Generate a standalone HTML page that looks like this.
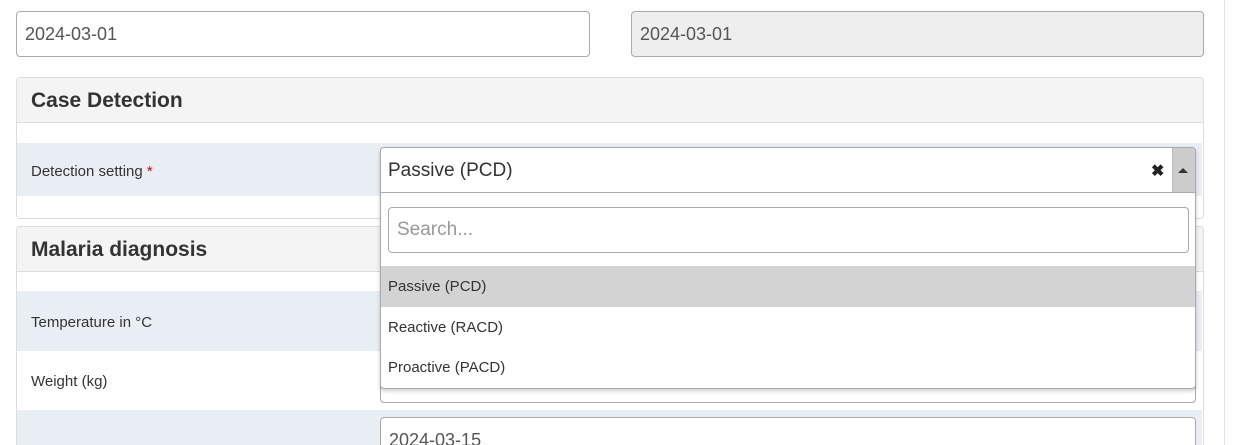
<!DOCTYPE html>
<html style="width:1235px;height:445px;overflow:hidden"><head><style>
*{box-sizing:border-box;margin:0;padding:0}
body{width:1235px;height:445px;overflow:hidden;background:#fff;font-family:"Liberation Sans",sans-serif;color:#333;position:relative}
.a{position:absolute}
.inp{position:absolute;border:1px solid #aaa;border-radius:4px;background:#fff;font-size:18px;color:#555;padding-left:8px;display:flex;align-items:center}
.panel{position:absolute;border:1px solid #ddd;border-radius:4px;background:#fff;overflow:hidden}
.ph{background:#f4f4f4;border-bottom:1px solid #ddd;height:45px;font-weight:bold;font-size:21px;padding-left:14px;line-height:45px;color:#333}
.lbl{position:absolute;left:31px;font-size:15px;color:#333}
.row{position:absolute;left:17px;width:1185px;background:#e9eef5}
</style></head><body>
<div class="a" style="left:1224px;top:0;width:1px;height:445px;background:#e5e5e5"></div>
<div class="inp" style="left:16px;top:11px;width:574px;height:46px">2024-03-01</div>
<div class="inp" style="left:631px;top:11px;width:573px;height:46px;background:#eee">2024-03-01</div>

<div class="panel" style="left:16px;top:77px;width:1188px;height:142px"><div class="ph">Case Detection</div></div>
<div class="row" style="top:143px;height:53px"></div>
<div class="lbl" style="top:163px">Detection setting <span style="color:#d00">*</span></div>

<div class="panel" style="left:16px;top:226px;width:1188px;height:230px"><div class="ph">Malaria diagnosis</div></div>
<div class="row" style="top:291px;height:60px"></div>
<div class="row" style="top:410px;height:40px"></div>
<div class="lbl" style="top:314px">Temperature in °C</div>
<div class="lbl" style="top:373px">Weight (kg)</div>
<div class="inp" style="left:380px;top:357px;width:816px;height:46px"></div>
<div class="inp" style="left:380px;top:417px;width:816px;height:46px;align-items:flex-start;padding-top:12px">2024-03-15</div>

<div class="a" style="left:380px;top:147px;width:816px;height:242px;border:1px solid #aaa;border-radius:4px;background:#fff;box-shadow:0 2px 4px rgba(0,0,0,.2)"></div>
<div class="a" style="left:380px;top:147px;width:816px;height:46px;border-bottom:1px solid #aaa;font-size:19px;color:#333;padding-left:8px;line-height:47px">Passive (PCD)</div>
<div class="a" style="left:1172px;top:148px;width:23px;height:44px;background:#ccc;border-left:1px solid #bbb;border-top-right-radius:3px"></div>
<div class="a" style="left:1178px;top:168px;width:0;height:0;border-left:5px solid transparent;border-right:5px solid transparent;border-bottom:5px solid #333"></div>
<div class="a" style="left:1151px;top:161px;font-size:16px;font-weight:bold;color:#222">✖</div>
<div class="inp" style="left:388px;top:207px;width:801px;height:46px;color:#999;font-size:19px">Search...</div>
<div class="a" style="left:381px;top:266px;width:814px;height:41px;background:#d3d3d3"></div>
<div class="a" style="left:388px;top:278px;font-size:15px;color:#333">Passive (PCD)</div>
<div class="a" style="left:388px;top:319px;font-size:15px;color:#333">Reactive (RACD)</div>
<div class="a" style="left:388px;top:359px;font-size:15px;color:#333">Proactive (PACD)</div>
</body></html>
